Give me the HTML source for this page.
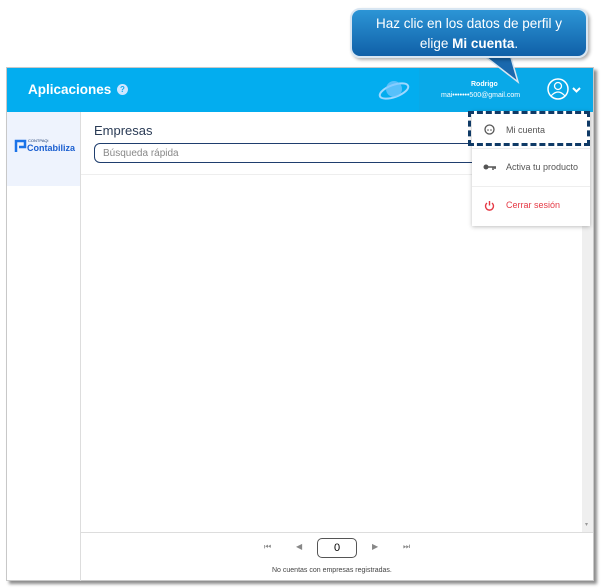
<!DOCTYPE html>
<html><head><meta charset="utf-8"><style>
*{margin:0;padding:0;box-sizing:border-box}
body{width:604px;height:588px;background:#fff;font-family:"Liberation Sans",sans-serif;position:relative;overflow:hidden}
.frame{position:absolute;left:6px;top:67px;width:588px;height:514px;border:1px solid #c8c8c8;box-shadow:3px 3px 3px rgba(0,0,0,.45);background:#fff}
.hdr{position:absolute;left:0;top:0;width:586px;height:44px;background:#03adef}
.hdr2{position:absolute;left:412px;top:0;width:174px;height:44px;background:#09a9e8}
.ttl{position:absolute;left:21px;top:14px;color:#fff;font-weight:bold;font-size:13.5px}
.q{position:absolute;left:110px;top:16px;width:11px;height:11px;border-radius:50%;background:#cfe6ff;color:#0aaef0;font-size:8px;font-weight:bold;text-align:center;line-height:11px}
.side{position:absolute;left:0;top:44px;width:74px;height:469px;border-right:1px solid #ddd}
.logo{position:absolute;left:0;top:0;width:73px;height:74px;background:#eef3fd}
.emp{position:absolute;left:87px;top:55px;font-size:13px;color:#2a3b55}
.srch{position:absolute;left:87px;top:75px;width:400px;height:20px;border:1.5px solid #1f3e6e;border-radius:6px;font-size:10px;color:#888;padding:4px 8px}
.line{position:absolute;left:74px;top:106px;width:500px;border-top:1px solid #eee}
.sb{position:absolute;left:575px;top:44px;width:11px;height:420px;background:#efefef}
.bot{position:absolute;left:74px;top:464px;width:512px;border-top:1px solid #ddd}
.pg{position:absolute;left:310px;top:470px;width:40px;height:20px;border:1px solid #555;border-radius:5px;text-align:center;font-size:11px;line-height:18px}
.ar{position:absolute;top:474px;font-size:8px;color:#888}
.nc{position:absolute;left:265px;top:499px;font-size:7px;color:#444}
.dd{position:absolute;left:472px;top:111px;width:118px;height:115px;background:#fff;box-shadow:0 1px 4px rgba(0,0,0,.25)}
.it{position:absolute;left:34px;font-size:9px;color:#555}
.dsh{position:absolute;left:468px;top:111px;width:122px;height:35px;border:3px dashed #0f3a66}
.bub{position:absolute;left:350px;top:8px;width:238px;height:50px;border-radius:10px;border:2px solid #d8e6f2;background:linear-gradient(#2c95d6,#1060a8);box-shadow:2px 2px 3px rgba(0,0,0,.3);color:#fff;text-align:center;font-size:13.5px;line-height:20px;padding-top:4px}
</style></head><body>
<div class="frame">
 <div class="hdr"><div class="hdr2"></div>
  <div class="ttl">Aplicaciones</div><div class="q">?</div>
  <svg style="position:absolute;left:370px;top:8px" width="34" height="28"><ellipse cx="17" cy="15" rx="15" ry="6" fill="none" stroke="#9fd8ff" stroke-width="2" transform="rotate(-20 17 15)"/><circle cx="17" cy="13" r="8" fill="#7ec8ff" opacity=".7"/></svg>
  <div style="position:absolute;left:464px;top:13px;color:#fff;font-size:7px;font-weight:bold">Rodrigo</div>
  <div style="position:absolute;left:434px;top:24px;color:#fff;font-size:7px">mai•••••••500@gmail.com</div>
  <svg style="position:absolute;left:540px;top:10px" width="36" height="24"><circle cx="11" cy="11" r="10" fill="none" stroke="#fff" stroke-width="1.5"/><circle cx="11" cy="8" r="3.5" fill="none" stroke="#fff" stroke-width="1.3"/><path d="M4 18 Q11 10 18 18" fill="none" stroke="#fff" stroke-width="1.3"/><path d="M26 10 l3.5 3.5 l3.5-3.5" fill="none" stroke="#fff" stroke-width="2"/></svg>
 </div>
 <div class="side"><div class="logo">
  <svg style="position:absolute;left:7px;top:26px" width="14" height="16"><path d="M2 14 V3 h9 v6 h-6" fill="none" stroke="#1a73e8" stroke-width="2.5"/></svg>
  <div style="position:absolute;left:21px;top:26px;font-size:4px;color:#1a3a6e">CONTPAQi</div>
  <div style="position:absolute;left:20px;top:31px;font-size:9px;color:#1a5fd0;font-weight:bold">Contabiliza</div>
 </div></div>
 <div class="emp">Empresas</div>
 <div class="srch">Búsqueda rápida</div>
 <div class="line"></div>
 <div class="sb"><div style="position:absolute;left:3px;bottom:4px;font-size:6px;color:#999">▾</div></div>
 <div class="bot"></div>
 <div class="ar" style="left:257px">⏮</div><div class="ar" style="left:289px">◀</div>
 <div class="pg">0</div>
 <div class="ar" style="left:365px">▶</div><div class="ar" style="left:396px">⏭</div>
 <div class="nc">No cuentas con empresas registradas.</div>
</div>
<div class="dd">
 <svg style="position:absolute;left:12px;top:13px" width="11" height="11"><circle cx="5.5" cy="5.5" r="4.5" fill="none" stroke="#555" stroke-width="1.3"/><circle cx="4" cy="6" r=".8" fill="#555"/><circle cx="7" cy="6" r=".8" fill="#555"/></svg>
 <div class="it" style="top:14px">Mi cuenta</div>
 <div style="position:absolute;left:0;top:37px;width:118px;border-top:1px solid #eee"></div>
 <svg style="position:absolute;left:11px;top:52px" width="14" height="8"><circle cx="3" cy="4" r="2.5" fill="#555"/><path d="M5 4 h8 M10 4 v3 M12 4 v2" stroke="#555" stroke-width="1.5"/></svg>
 <div class="it" style="top:51px">Activa tu producto</div>
 <div style="position:absolute;left:0;top:75px;width:118px;border-top:1px solid #eee"></div>
 <svg style="position:absolute;left:12px;top:89px" width="11" height="11"><path d="M3 3 A4 4 0 1 0 8 3" fill="none" stroke="#e53945" stroke-width="1.4"/><path d="M5.5 1 v4.5" stroke="#e53945" stroke-width="1.4"/></svg>
 <div class="it" style="top:89px;color:#e53945">Cerrar sesión</div>
</div>
<div class="dsh"></div>
<svg style="position:absolute;left:480px;top:54px" width="50" height="32"><path d="M2 0 L38 28 L30 0 Z" fill="#1a68ad" stroke="#d8e6f2" stroke-width="1.5"/></svg>
<div class="bub">Haz clic en los datos de perfil y<br>elige <b>Mi cuenta</b>.</div>
</body></html>
